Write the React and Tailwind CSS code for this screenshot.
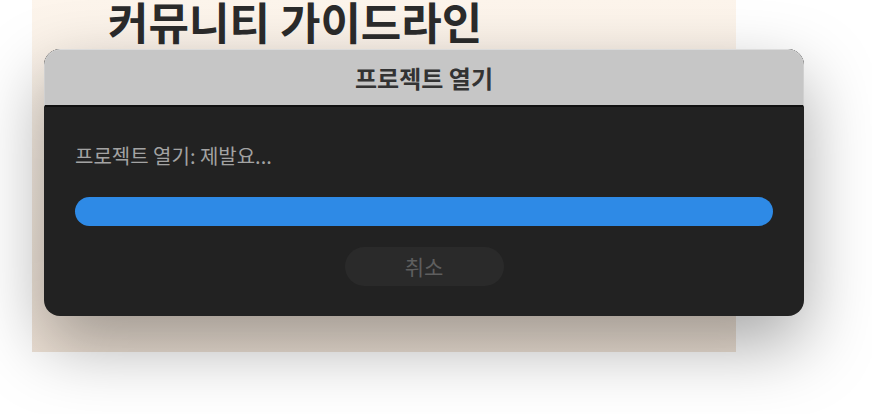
export default function App() {
  const font = { fontFamily: '"Noto Sans CJK KR", "Noto Sans", sans-serif' };
  return (
    <div className="relative w-[872px] h-[414px] overflow-hidden bg-white" style={font}>
      <div className="ml-[32px] w-[704px] h-[352px] flex flex-col overflow-hidden bg-gradient-to-b from-[#fdf5ec] to-[#eee2d6]">
        <h1 className="pl-[76px] text-[44px] leading-[42px] font-bold text-[#2b2b2b]">
          커뮤니티 가이드라인
        </h1>
      </div>
      <div className="absolute left-[44px] top-[49px] w-[760px] h-[267px] rounded-[16px] overflow-hidden shadow-[0_28px_70px_rgba(0,0,0,0.35)] flex flex-col bg-[#222222]">
        <div className="h-[58px] shrink-0 bg-[#c6c6c6] border-b-2 border-[#111] flex items-center justify-center rounded-t-[16px] border-t border-x border-t-[#dcdcdc] border-x-[#d0d0d0]">
          <span className="text-[24px] font-bold text-[#333]">프로젝트 열기</span>
        </div>
        <div className="flex-1 px-[31px] pt-[35px] flex flex-col">
          <div className="text-[20px] leading-[28px] text-[#a3a3a3]">프로젝트 열기: 제발요...</div>
          <div className="mt-[27px] h-[29px] shrink-0 rounded-full bg-[#2e8ae6]" />
          <div className="mt-[21px] flex justify-center">
            <button className="w-[159px] h-[39px] rounded-full bg-[#2a2a2a] text-[21px] text-[#5e5e5e]">취소</button>
          </div>
        </div>
      </div>
    </div>
  );
}
